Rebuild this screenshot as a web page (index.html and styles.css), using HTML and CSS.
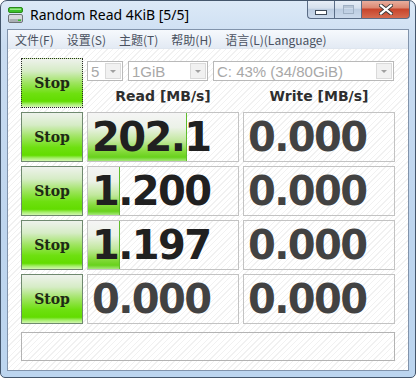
FILE: index.html
```html
<!DOCTYPE html>
<html lang="en">
<head>
  <meta charset="UTF-8">
  <title>Random Read 4KiB [5/5]</title>
  <link rel="stylesheet" href="styles.css">
</head>
<body>
  <div class="window">
    <div class="titlebar">
      <svg class="app-icon" width="16" height="17" viewBox="0 0 16 17">
        <rect x="0.5" y="0.5" width="14" height="5" rx="1.5" fill="#3cc02a" stroke="#2a8a1c"/>
        <rect x="2" y="1.5" width="11" height="1.5" fill="#9be88a"/>
        <rect x="0.5" y="7.5" width="14" height="8" rx="1.5" fill="#d6d9dc" stroke="#6e7378"/>
        <rect x="1.5" y="12" width="12" height="3" fill="#a9aeb3"/>
        <rect x="10" y="12.5" width="3" height="1.5" fill="#36c22a"/>
      </svg>
      <span class="title">Random Read 4KiB [5/5]</span>
      <div class="caption-btns">
        <span class="cbtn min"><i></i></span>
        <span class="cbtn max"><i></i></span>
        <span class="cbtn close">
          <svg width="14" height="11" viewBox="0 0 14 11">
            <path d="M2 1.5 L12 9.5 M12 1.5 L2 9.5" stroke="#3a3a3a" stroke-width="4" stroke-linecap="square"/>
            <path d="M2 1.5 L12 9.5 M12 1.5 L2 9.5" stroke="#fff" stroke-width="2.2" stroke-linecap="square"/>
          </svg>
        </span>
      </div>
    </div>

    <div class="client">
      <div class="menubar">
        <span>文件(F)</span>
        <span>设置(S)</span>
        <span>主题(T)</span>
        <span>帮助(H)</span>
        <span>语言(L)(Language)</span>
      </div>

      <div class="panel">
        <div class="grid">
          <button class="stop focus">Stop</button>
          <div class="controls">
            <div class="combos">
              <div class="combo count"><span>5</span><b></b></div>
              <div class="combo size"><span>1GiB</span><b></b></div>
              <div class="combo drive"><span>C: 43% (34/80GiB)</span><b></b></div>
            </div>
            <div class="heads">
              <span>Read [MB/s]</span>
              <span>Write [MB/s]</span>
            </div>
          </div>

          <button class="stop">Stop</button>
          <div class="cell"><div class="bar" style="width: 98px"></div><span class="val">202.1</span></div>
          <div class="cell"><span class="val zero">0.000</span></div>

          <button class="stop">Stop</button>
          <div class="cell"><div class="bar" style="width: 31px"></div><span class="val">1.200</span></div>
          <div class="cell"><span class="val zero">0.000</span></div>

          <button class="stop">Stop</button>
          <div class="cell"><div class="bar" style="width: 31px"></div><span class="val">1.197</span></div>
          <div class="cell"><span class="val zero">0.000</span></div>

          <button class="stop">Stop</button>
          <div class="cell"><span class="val zero">0.000</span></div>
          <div class="cell"><span class="val zero">0.000</span></div>
        </div>
        <div class="status"></div>
      </div>
    </div>
  </div>
</body>
</html>
```

FILE: styles.css
```css
body {
  margin: 0;
  background: #fff;
  font-family: "DejaVu Sans", sans-serif;
}

.window {
  width: 416px;
  height: 378px;
  box-sizing: border-box;
  border: 1px solid #44566c;
  border-radius: 7px 7px 5px 5px;
  background: linear-gradient(#dce9f7 0%, #c9dcf1 12%, #bed5ee 60%, #bcd5ef 100%);
  display: flex;
  flex-direction: column;
  overflow: hidden;
}

.titlebar {
  height: 28px;
  display: flex;
  align-items: flex-start;
}

.app-icon {
  margin: 6px 0 0 7px;
}

.title {
  margin: 5px 0 0 6px;
  font-family: "Noto Sans", sans-serif;
  font-size: 14px;
  line-height: 18px;
  color: #000;
}

.caption-btns {
  margin-left: auto;
  margin-right: 5px;
  margin-top: -1px;
  display: flex;
}

.cbtn {
  height: 19px;
  box-sizing: border-box;
  border: 1px solid #5a6c86;
  border-top: none;
  display: flex;
  align-items: center;
  justify-content: center;
}

.min, .max {
  width: 27px;
  background: linear-gradient(#e8eff8 0%, #d5e0ed 45%, #bccde1 52%, #cbdaec 100%);
}

.min {
  border-radius: 0 0 0 4px;
  border-right: none;
}

.max {
  border-right: none;
}

.min i {
  width: 10px;
  height: 3px;
  margin-top: 6px;
  background: #fff;
  border: 1px solid #3f4a58;
}

.max i {
  width: 9px;
  height: 7px;
  border: 1px solid #9fb0c4;
  box-shadow: inset 0 2px 0 #b8c6d6;
}

.close {
  width: 49px;
  border-radius: 0 0 4px 0;
  background: linear-gradient(#eab3a4 0%, #dc8a74 42%, #c8452c 52%, #d56b50 100%);
}

.client {
  flex: 1;
  margin: 0 6px 6px 6px;
  border: 1px solid #8193ab;
  background: #fff;
  display: flex;
  flex-direction: column;
}

.menubar {
  height: 18px;
  display: flex;
  align-items: center;
  gap: 13px;
  padding-left: 7px;
  background: linear-gradient(#f6f9fd, #e3eaf4);
  border-bottom: 1px solid #dfe6ef;
  font-family: "Noto Sans CJK SC", sans-serif;
  font-size: 12px;
  color: #4a5160;
}

.panel {
  flex: 1;
  padding: 9px 13px 0 13px;
  background: repeating-linear-gradient(-45deg, #ffffff 0px, #ffffff 3px, #f1f1f1 3px, #f1f1f1 4px);
}

.grid {
  display: grid;
  grid-template-columns: 62px 152px 152px;
  grid-auto-rows: 50px;
  gap: 4px;
}

.stop {
  margin: 0;
  padding: 0;
  border: 1px solid #6f896f;
  background: linear-gradient(#eef2ec 0%, #d6ecc6 25%, #9de45e 50%, #6ee010 72%, #62dc00 88%, #a4ee6a 94%, #d2f6b0 100%);
  font-family: "DejaVu Serif", serif;
  font-weight: bold;
  font-size: 14px;
  color: #1e2a14;
}

.stop.focus {
  border: 1px dotted #2a2a2a;
}

.controls {
  grid-column: span 2;
  display: flex;
  flex-direction: column;
}

.combos {
  margin-top: 3px;
  display: flex;
  gap: 5px;
}

.combo {
  height: 20px;
  box-sizing: border-box;
  border: 1px solid #b9b9b9;
  background: #fff;
  display: flex;
  align-items: center;
  font-family: "Liberation Sans", sans-serif;
  font-size: 15px;
  color: #a8a8a8;
}

.combo span {
  flex: 1;
  padding-left: 3px;
  white-space: nowrap;
}

.combo b {
  width: 16px;
  height: 16px;
  margin-right: 1px;
  box-sizing: border-box;
  border: 1px solid #dadada;
  background: #f1f1f1 url("data:image/svg+xml;utf8,<svg xmlns='http://www.w3.org/2000/svg' width='14' height='14'><path d='M4 6 L10 6 L7 9 Z' fill='%23a0a0a0'/></svg>") center no-repeat;
}

.count { width: 36px; }
.size { width: 80px; }
.drive { width: 181px; }

.heads {
  margin-top: 7px;
  display: grid;
  grid-template-columns: 152px 152px;
  gap: 4px;
  font-weight: bold;
  font-size: 14px;
  color: #2e2e2e;
  text-align: center;
}

.cell {
  position: relative;
  border: 1px solid #c3c3c3;
  display: flex;
  align-items: center;
  overflow: hidden;
}

.bar {
  position: absolute;
  left: 0;
  top: 0;
  bottom: 0;
  border-right: 1px solid #5fbd2c;
  background: linear-gradient(#f5f5f5 0%, #ecf2e8 30%, #c2e89e 58%, #84da3a 80%, #68d21c 92%, #a6e87c 100%);
}

.val {
  position: relative;
  padding-left: 4px;
  font-weight: bold;
  font-size: 40px;
  letter-spacing: -1.6px;
  line-height: 48px;
  color: #202020;
}

.val.zero {
  color: #424242;
}

.status {
  margin-top: 8px;
  height: 29px;
  box-sizing: border-box;
  border: 1px solid #b3b3b3;
}
```
